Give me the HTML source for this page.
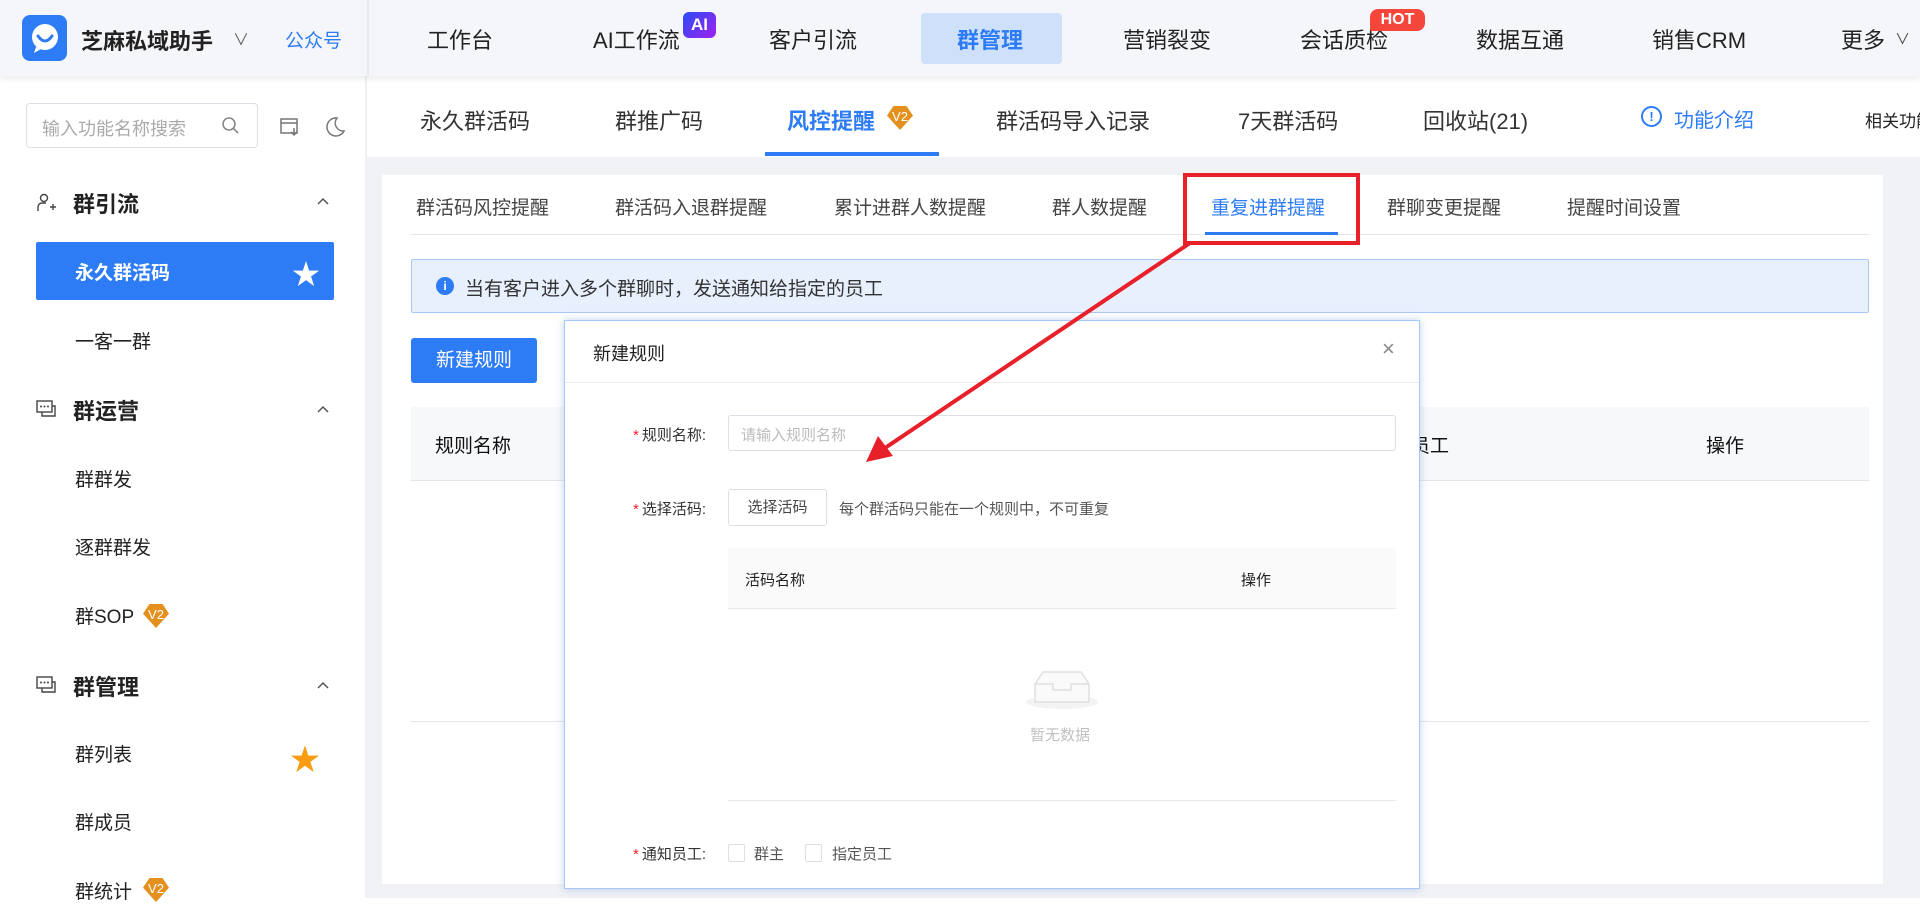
<!DOCTYPE html>
<html><head><meta charset="utf-8">
<style>
*{box-sizing:border-box;margin:0;padding:0}
body{width:1920px;height:898px;overflow:hidden;background:#fff;font-family:"Liberation Sans","Noto Sans CJK SC",sans-serif;color:#333;position:relative}
.a{position:absolute;white-space:nowrap}
.top{position:absolute;left:0;top:0;width:1920px;height:76px;background:#f5f6fa;box-shadow:0 3px 6px rgba(0,0,0,.08);z-index:2}
.nav{font-size:22px;color:#222;top:23px}
.sub{font-size:22px;color:#333;top:104px}
.st{font-size:19px;color:#444;top:193px}
.si{font-size:19px;color:#222;left:75px}
.sh{font-size:22px;font-weight:bold;color:#222;left:73px}
.lbl{font-size:15px;color:#333}
.req{color:#f5222d;margin-right:3px}
.v2{position:absolute;width:26px;height:24px;background:#e3901e;clip-path:polygon(25% 0,75% 0,100% 40%,50% 100%,0 40%);color:#fff;font-size:13px;text-align:center;line-height:22px}
</style></head><body>
<div class="top">
  <div class="a" style="left:22px;top:15px;width:45px;height:46px;background:#2d7cf6;border-radius:8px"></div>
  <svg class="a" style="left:26px;top:19px" width="38" height="38" viewBox="0 0 38 38"><circle cx="19" cy="18" r="13" fill="#fff"/><path d="M12 17 Q19 27 26 17" stroke="#2d7cf6" stroke-width="3" fill="none" stroke-linecap="round"/><path d="M10 28 L8 34 L15 30Z" fill="#fff"/></svg>
  <div class="a" style="left:81px;top:24px;font-size:22px;font-weight:bold;color:#222">芝麻私域助手</div>
  <div class="a" style="left:233px;top:26px;font-size:16px;color:#666">∨</div>
  <div class="a" style="left:285px;top:26px;font-size:19px;color:#2d7cf6">公众号</div>
  <div class="a" style="left:367px;top:0;width:2px;height:76px;background:#e8e9ee"></div>
  <div class="a nav" style="left:427px">工作台</div>
  <div class="a nav" style="left:593px">AI工作流</div>
  <div class="a" style="left:683px;top:12px;width:33px;height:26px;border-radius:6px;background:linear-gradient(135deg,#2a4df5,#a020f0);color:#fff;font-size:17px;font-weight:bold;text-align:center;line-height:26px">AI</div>
  <div class="a nav" style="left:769px">客户引流</div>
  <div class="a" style="left:921px;top:13px;width:141px;height:51px;background:#cfe0fb;border-radius:4px"></div>
  <div class="a nav" style="left:957px;color:#2d7cf6;font-weight:bold">群管理</div>
  <div class="a nav" style="left:1123px">营销裂变</div>
  <div class="a nav" style="left:1300px">会话质检</div>
  <div class="a" style="left:1370px;top:9px;width:55px;height:22px;border-radius:8px 8px 8px 2px;background:#f5463c;color:#fff;font-size:16px;font-weight:bold;text-align:center;line-height:22px">HOT</div>
  <div class="a nav" style="left:1476px">数据互通</div>
  <div class="a nav" style="left:1652px">销售CRM</div>
  <div class="a nav" style="left:1841px">更多</div>
  <div class="a" style="left:1895px;top:28px;font-size:15px;color:#444">∨</div>
</div>
<!-- sidebar -->
<div class="a" style="left:365px;top:76px;width:2px;height:822px;background:#eef0f4"></div>
<div class="a" style="left:26px;top:103px;width:232px;height:45px;border:1px solid #dcdfe6;border-radius:4px"></div>
<div class="a" style="left:42px;top:115px;font-size:18px;color:#aaa">输入功能名称搜索</div>
<svg class="a" style="left:221px;top:116px" width="20" height="20"><circle cx="8" cy="8" r="6" stroke="#888" stroke-width="1.6" fill="none"/><path d="M12.5 12.5L17 17" stroke="#888" stroke-width="1.6"/></svg>
<svg class="a" style="left:279px;top:116px" width="22" height="22"><rect x="2" y="3" width="16" height="14" stroke="#777" stroke-width="1.5" fill="none"/><path d="M2 7h16M15 12v7M12 16l3 3 3-3" stroke="#777" stroke-width="1.5" fill="none"/></svg>
<svg class="a" style="left:323px;top:115px" width="24" height="24"><path d="M14 3 A9 9 0 1 0 21 16 A8 8 0 0 1 14 3Z" stroke="#777" stroke-width="1.5" fill="none"/></svg>
<svg class="a" style="left:36px;top:192px" width="22" height="22"><circle cx="8" cy="6" r="3.5" stroke="#444" stroke-width="1.4" fill="none"/><path d="M2 19v-4a4 4 0 0 1 4-4h4M14 15h6M17 12v6" stroke="#444" stroke-width="1.4" fill="none"/></svg>
<div class="a sh" style="top:187px">群引流</div>
<svg class="a" style="left:316px;top:196px" width="14" height="10"><path d="M2 8L7 3L12 8" stroke="#555" stroke-width="1.5" fill="none"/></svg>
<div class="a" style="left:36px;top:242px;width:298px;height:58px;background:#2d7cf6;border-radius:2px"></div>
<div class="a" style="left:75px;top:258px;font-size:19px;font-weight:bold;color:#fff">永久群活码</div>
<div class="a" style="left:292px;top:253px;font-size:28px;color:#fff">★</div>
<div class="a si" style="top:327px">一客一群</div>
<svg class="a" style="left:35px;top:399px" width="24" height="22"><rect x="2" y="2" width="15" height="11" stroke="#444" stroke-width="1.4" fill="none"/><path d="M7 13v4h13V7h-3" stroke="#444" stroke-width="1.4" fill="none"/><circle cx="6" cy="7.5" r="1" fill="#444"/><circle cx="9.5" cy="7.5" r="1" fill="#444"/><circle cx="13" cy="7.5" r="1" fill="#444"/></svg>
<div class="a sh" style="top:394px">群运营</div>
<svg class="a" style="left:316px;top:404px" width="14" height="10"><path d="M2 8L7 3L12 8" stroke="#555" stroke-width="1.5" fill="none"/></svg>
<div class="a si" style="top:465px">群群发</div>
<div class="a si" style="top:533px">逐群群发</div>
<div class="a si" style="top:602px">群SOP</div>
<div class="v2" style="left:143px;top:604px">V2</div>
<svg class="a" style="left:35px;top:675px" width="24" height="22"><rect x="2" y="2" width="15" height="11" stroke="#444" stroke-width="1.4" fill="none"/><path d="M7 13v4h13V7h-3" stroke="#444" stroke-width="1.4" fill="none"/><circle cx="6" cy="7.5" r="1" fill="#444"/><circle cx="9.5" cy="7.5" r="1" fill="#444"/><circle cx="13" cy="7.5" r="1" fill="#444"/></svg>
<div class="a sh" style="top:670px">群管理</div>
<svg class="a" style="left:316px;top:680px" width="14" height="10"><path d="M2 8L7 3L12 8" stroke="#555" stroke-width="1.5" fill="none"/></svg>
<div class="a si" style="top:740px">群列表</div>
<div class="a" style="left:290px;top:735px;font-size:30px;color:#fa9c0f">★</div>
<div class="a si" style="top:808px">群成员</div>
<div class="a si" style="top:877px">群统计</div>
<div class="v2" style="left:143px;top:878px">V2</div>
<!-- sub nav -->
<div class="a sub" style="left:420px">永久群活码</div>
<div class="a sub" style="left:615px">群推广码</div>
<div class="a sub" style="left:787px;color:#2d7cf6;font-weight:bold">风控提醒</div>
<div class="v2" style="left:887px;top:106px">V2</div>
<div class="a" style="left:765px;top:152px;width:174px;height:4px;background:#2d7cf6"></div>
<div class="a sub" style="left:996px">群活码导入记录</div>
<div class="a sub" style="left:1238px">7天群活码</div>
<div class="a sub" style="left:1423px">回收站(21)</div>
<div class="a" style="left:1641px;top:106px;width:21px;height:21px;border:2px solid #2d7cf6;border-radius:50%;color:#2d7cf6;font-size:13px;text-align:center;line-height:17px;font-weight:bold">!</div>
<div class="a" style="left:1674px;top:104px;font-size:20px;color:#2d7cf6">功能介绍</div>
<div class="a" style="left:1865px;top:107px;font-size:17px;color:#222">相关功能</div>
<!-- gray area -->
<div class="a" style="left:367px;top:157px;width:1553px;height:741px;background:#f0f2f5"></div>
<div class="a" style="left:382px;top:175px;width:1501px;height:709px;background:#fff"></div>
<div class="a st" style="left:416px">群活码风控提醒</div>
<div class="a st" style="left:615px">群活码入退群提醒</div>
<div class="a st" style="left:834px">累计进群人数提醒</div>
<div class="a st" style="left:1052px">群人数提醒</div>
<div class="a st" style="left:1211px;color:#2d7cf6">重复进群提醒</div>
<div class="a st" style="left:1387px">群聊变更提醒</div>
<div class="a st" style="left:1567px">提醒时间设置</div>
<div class="a" style="left:411px;top:234px;width:1458px;height:1px;background:#e4e6eb"></div>
<div class="a" style="left:1205px;top:232px;width:133px;height:3px;background:#2d7cf6"></div>
<div class="a" style="left:411px;top:259px;width:1458px;height:54px;background:#e8f0fe;border:1px solid #a9c8f5;border-radius:2px"></div>
<div class="a" style="left:436px;top:277px;width:18px;height:18px;background:#2d7cf6;border-radius:50%;color:#fff;font-size:12px;text-align:center;line-height:18px;font-weight:bold">i</div>
<div class="a" style="left:465px;top:274px;font-size:19px;color:#333">当有客户进入多个群聊时，发送通知给指定的员工</div>
<div class="a" style="left:411px;top:338px;width:126px;height:45px;background:#2d7cf6;border-radius:3px;color:#fff;font-size:19px;text-align:center;line-height:45px">新建规则</div>
<div class="a" style="left:411px;top:407px;width:1458px;height:74px;background:#f7f8fa;border-bottom:1px solid #e4e6eb"></div>
<div class="a" style="left:435px;top:431px;font-size:19px;color:#111">规则名称</div>
<div class="a" style="left:1411px;top:431px;font-size:19px;color:#111">员工</div>
<div class="a" style="left:1706px;top:431px;font-size:19px;color:#111">操作</div>
<div class="a" style="left:411px;top:721px;width:1458px;height:1px;background:#e4e6eb"></div>
<!-- modal -->
<div class="a" style="left:564px;top:320px;width:856px;height:569px;background:#fff;border:1px solid #a9c8f5;box-shadow:0 0 8px rgba(80,120,200,.35)"></div>
<div class="a" style="left:593px;top:340px;font-size:18px;color:#222">新建规则</div>
<div class="a" style="left:1382px;top:336px;font-size:22px;color:#888">×</div>
<div class="a" style="left:565px;top:382px;width:854px;height:1px;background:#ececec"></div>
<div class="a lbl" style="left:633px;top:424px"><span class="req">*</span>规则名称:</div>
<div class="a" style="left:728px;top:415px;width:668px;height:36px;border:1px solid #dcdfe6;border-radius:3px"></div>
<div class="a" style="left:741px;top:424px;font-size:15px;color:#bbb">请输入规则名称</div>
<div class="a lbl" style="left:633px;top:498px"><span class="req">*</span>选择活码:</div>
<div class="a" style="left:728px;top:489px;width:99px;height:37px;border:1px solid #dcdfe6;border-radius:3px;font-size:15px;color:#444;text-align:center;line-height:35px">选择活码</div>
<div class="a" style="left:839px;top:498px;font-size:15px;color:#555">每个群活码只能在一个规则中，不可重复</div>
<div class="a" style="left:728px;top:548px;width:668px;height:61px;background:#fafafa;border-bottom:1px solid #e8e8e8"></div>
<div class="a" style="left:745px;top:569px;font-size:15px;color:#222">活码名称</div>
<div class="a" style="left:1241px;top:569px;font-size:15px;color:#222">操作</div>
<svg class="a" style="left:1025px;top:664px" width="74" height="46"><ellipse cx="37" cy="38" rx="36" ry="7" fill="#f3f3f3"/><path d="M10 20 L18 8 H56 L64 20 V38 H10Z" fill="#fafafa" stroke="#e0e0e0" stroke-width="1.5"/><path d="M10 20 H28 V26 H46 V20 H64" fill="none" stroke="#e0e0e0" stroke-width="1.5"/></svg>
<div class="a" style="left:1030px;top:724px;font-size:15px;color:#c0c0c0">暂无数据</div>
<div class="a" style="left:728px;top:800px;width:668px;height:1px;background:#e8e8e8"></div>
<div class="a lbl" style="left:633px;top:843px"><span class="req">*</span>通知员工:</div>
<div class="a" style="left:728px;top:844px;width:17px;height:18px;border:1px solid #dcdfe6;border-radius:2px"></div>
<div class="a" style="left:754px;top:843px;font-size:15px;color:#555">群主</div>
<div class="a" style="left:805px;top:844px;width:17px;height:18px;border:1px solid #dcdfe6;border-radius:2px"></div>
<div class="a" style="left:832px;top:843px;font-size:15px;color:#555">指定员工</div>
<!-- red highlight -->
<div class="a" style="left:1183px;top:173px;width:177px;height:72px;border:4px solid #e8202a"></div>
<svg class="a" style="left:0;top:0" width="1920" height="898"><line x1="1190" y1="243" x2="885" y2="448" stroke="#e8202a" stroke-width="4"/><path d="M866 462 L878 436 L893 456Z" fill="#e8202a"/></svg>
</body></html>
